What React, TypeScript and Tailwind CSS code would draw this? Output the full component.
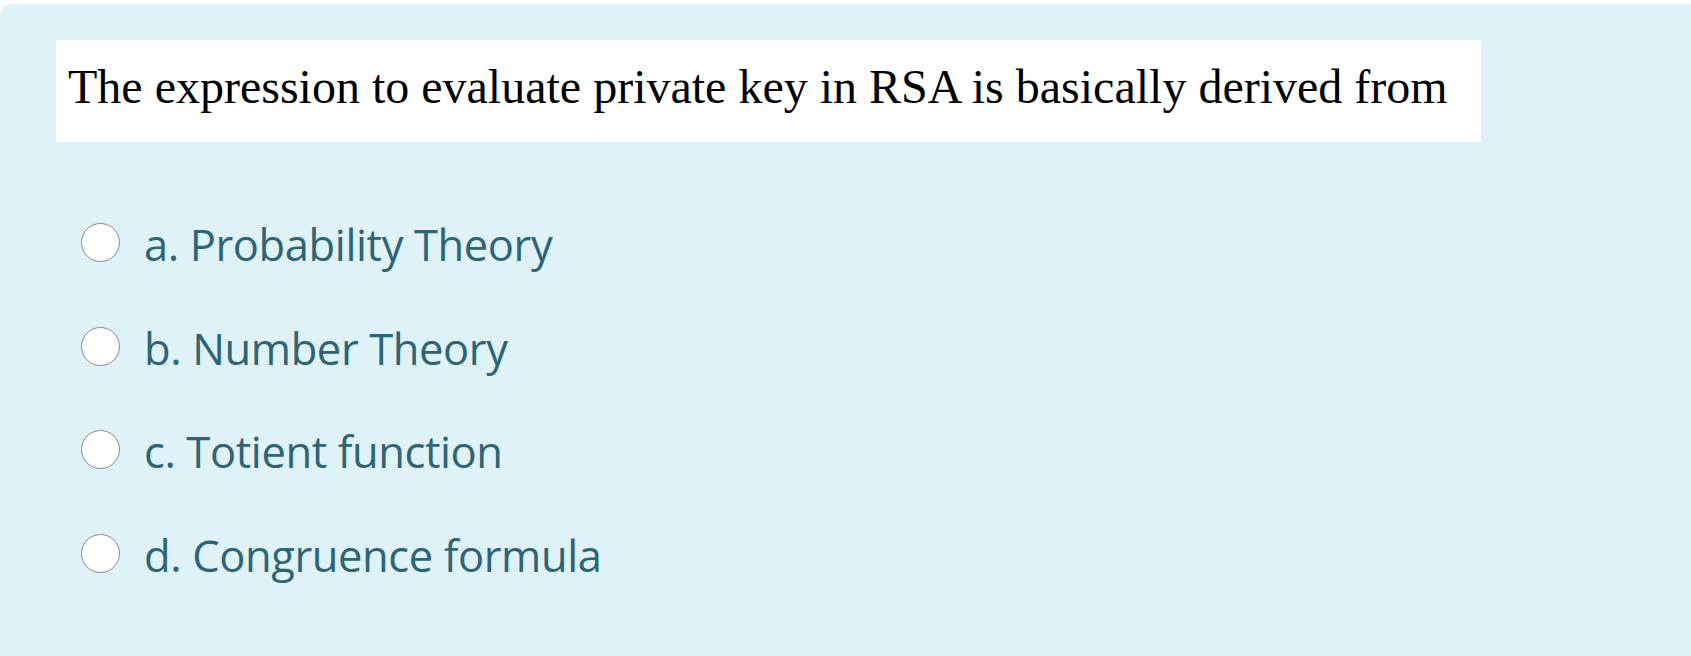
import React from "react";

const options = [
  "a. Probability Theory",
  "b. Number Theory",
  "c. Totient function",
  "d. Congruence formula",
];

export default function App() {
  return (
    <div className="w-full h-[656px] bg-white pt-[4px] overflow-hidden">
      <div className="h-[652px] bg-[#def2f8] rounded-tl-[12px] pl-[56px] pt-[36px]">
        <div className="w-[1425px] h-[102px] bg-white pl-[12px] pt-[23px]">
          <p
            className="text-[48px] leading-[48px] text-black whitespace-nowrap"
            style={{ fontFamily: '"Liberation Serif", "Times New Roman", serif' }}
          >
            The expression to evaluate private key in RSA is basically derived from
          </p>
        </div>
        <div className="mt-[49px] flex flex-col">
          {options.map((o) => (
            <label key={o} className="h-[103.5px] flex items-center">
              <span className="ml-[25px] w-[39px] h-[39px] rounded-full bg-white border-[1.5px] border-[#8a8a8a] shrink-0" />
              <span
                className="ml-[24px] text-[43.5px] leading-[43.5px] tracking-[-0.4px] text-[#2f6473] whitespace-nowrap translate-y-[2px]"
                style={{ fontFamily: '"Open Sans", "Noto Sans", sans-serif' }}
              >
                {o}
              </span>
            </label>
          ))}
        </div>
      </div>
    </div>
  );
}
